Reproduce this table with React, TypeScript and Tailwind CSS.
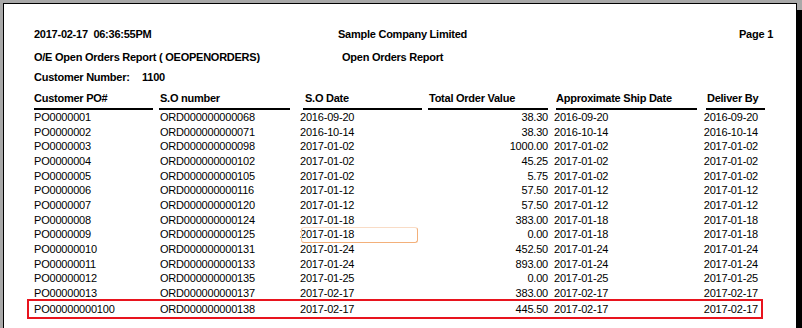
const rows = [
  ['PO0000001', 'ORD000000000068', '2016-09-20', '38.30', '2016-09-20', '2016-09-20'],
  ['PO0000002', 'ORD000000000071', '2016-10-14', '38.30', '2016-10-14', '2016-10-14'],
  ['PO0000003', 'ORD000000000098', '2017-01-02', '1000.00', '2017-01-02', '2017-01-02'],
  ['PO0000004', 'ORD000000000102', '2017-01-02', '45.25', '2017-01-02', '2017-01-02'],
  ['PO0000005', 'ORD000000000105', '2017-01-02', '5.75', '2017-01-02', '2017-01-02'],
  ['PO0000006', 'ORD000000000116', '2017-01-12', '57.50', '2017-01-12', '2017-01-12'],
  ['PO0000007', 'ORD000000000120', '2017-01-12', '57.50', '2017-01-12', '2017-01-12'],
  ['PO0000008', 'ORD000000000124', '2017-01-18', '383.00', '2017-01-18', '2017-01-18'],
  ['PO0000009', 'ORD000000000125', '2017-01-18', '0.00', '2017-01-18', '2017-01-18'],
  ['PO00000010', 'ORD000000000131', '2017-01-24', '452.50', '2017-01-24', '2017-01-24'],
  ['PO00000011', 'ORD000000000133', '2017-01-24', '893.00', '2017-01-24', '2017-01-24'],
  ['PO00000012', 'ORD000000000135', '2017-01-25', '0.00', '2017-01-25', '2017-01-25'],
  ['PO00000013', 'ORD000000000137', '2017-02-17', '383.00', '2017-02-17', '2017-02-17'],
]

const last = ['PO00000000100', 'ORD000000000138', '2017-02-17', '445.50', '2017-02-17', '2017-02-17']

const DataRow = ({ r }: { r: string[] }) => (
  <div className="flex h-[14.67px] items-center whitespace-nowrap text-[11px] leading-[14.67px] tracking-[-0.2px] text-black">
    <div className="w-[125px]">{r[0]}</div>
    <div className="w-[141px] pl-px">{r[1]}</div>
    <div className="w-[125px]">{r[2]}</div>
    <div className="w-[128px] pr-[5px] text-right">{r[3]}</div>
    <div className="w-[148px] pl-px">{r[4]}</div>
    <div className="w-[66px] pr-[9px] text-right">{r[5]}</div>
  </div>
)

const HeadCell = ({ label, w, pl, ml, lw }: { label: string; w: string; pl: string; ml: string; lw: string }) => (
  <div className={`flex flex-col ${w}`}>
    <div className={`h-[14px] leading-[14px] ${pl}`}>{label}</div>
    <div className={`mt-[3px] h-[2px] bg-black ${ml} ${lw}`} />
  </div>
)

export default function App() {
  return (
    <div
      className="flex h-[328px] w-[802px] overflow-hidden bg-[#a8a8a8] pl-[3px] pt-[3px]"
      style={{ fontFamily: '"Liberation Sans", Arial, sans-serif' }}
    >
      <div className="relative h-[340px] w-[794px] border-l border-r border-t border-black bg-white pl-[30px] pt-[23px]">
        <div className="flex h-[14px] items-center whitespace-nowrap text-[11px] font-bold leading-[14px] tracking-[-0.25px]">
          <div className="w-[304px]">2017-02-17&nbsp;&nbsp;06:36:55PM</div>
          <div>Sample Company Limited</div>
          <div className="ml-auto pr-[23px]">Page 1</div>
        </div>
        <div className="mt-[9px] flex h-[14px] items-center whitespace-nowrap text-[11px] font-bold leading-[14px] tracking-[-0.25px]">
          <div className="w-[308px]">O/E Open Orders Report ( OEOPENORDERS)</div>
          <div>Open Orders Report</div>
        </div>
        <div className="mt-[6px] flex h-[14px] items-center whitespace-nowrap text-[11px] font-bold leading-[14px] tracking-[-0.25px]">
          <div className="w-[108px]">Customer Number:</div>
          <div>1100</div>
        </div>
        <div className="mt-[7px] flex whitespace-nowrap text-[11px] font-bold tracking-[-0.25px]">
          <HeadCell label="Customer PO#" w="w-[125px]" pl="pl-0" ml="ml-0" lw="w-[119px]" />
          <HeadCell label="S.O number" w="w-[141px]" pl="pl-px" ml="ml-0" lw="w-[131px]" />
          <HeadCell label="S.O Date" w="w-[125px]" pl="pl-[5px]" ml="ml-[3px]" lw="w-[119px]" />
          <HeadCell label="Total Order Value" w="w-[128px]" pl="pl-[4px]" ml="ml-[3px]" lw="w-[120px]" />
          <HeadCell label="Approximate Ship Date" w="w-[148px]" pl="pl-[3px]" ml="ml-[3px]" lw="w-[141px]" />
          <HeadCell label="Deliver By" w="w-[66px]" pl="pl-[6px]" ml="ml-[5px]" lw="w-[59px]" />
        </div>
        <div className="relative">
          {rows.map((r) => (
            <DataRow key={r[0]} r={r} />
          ))}
          <div className="absolute left-[267px] top-[117px] h-[16px] w-[117px] rounded-[3px] border border-[#f3b07a] border-t-[#f9dcc6] border-l-[#f6c9a4]" />
        </div>
        <div className="relative mt-[1px]">
          <DataRow r={last} />
          <div className="absolute -left-[7px] -top-[3px] h-[20px] w-[736px] border-2 border-[#e8141e]" />
        </div>
      </div>
      <div className="mt-[7px] w-[5px] bg-black" />
    </div>
  )
}
